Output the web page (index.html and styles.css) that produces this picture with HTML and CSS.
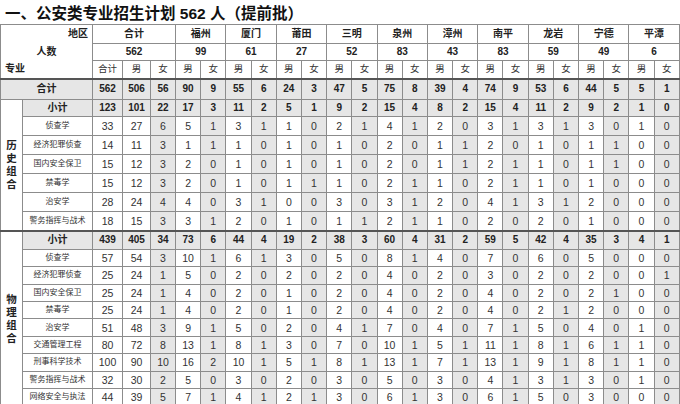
FILE: index.html
```html
<!DOCTYPE html>
<html lang="zh-CN">
<head>
<meta charset="utf-8">
<title>公安类专业招生计划</title>
<link rel="stylesheet" href="styles.css">
</head>
<body>
<h1 class="title">一、公安类专业招生计划 562 人（提前批）</h1>
<table class="plan">
<colgroup>
<col class="c-grp"><col class="c-major"><col class="c-t"><col class="c-m"><col class="c-f fem">
<col class="c-city"><col class="c-city fem"><col class="c-city"><col class="c-city fem">
<col class="c-city"><col class="c-city fem"><col class="c-city"><col class="c-city fem">
<col class="c-city"><col class="c-city fem"><col class="c-city"><col class="c-city fem">
<col class="c-city"><col class="c-city fem"><col class="c-city"><col class="c-city fem">
<col class="c-city"><col class="c-city fem"><col class="c-city"><col class="c-city fem">
</colgroup>
<thead>
<tr class="r-h1">
<th class="corner" rowspan="3" colspan="2"><div class="dq">地区</div><div class="rs">人数</div><div class="zy">专业</div></th>
<th colspan="3">合计</th><th colspan="2">福州</th><th colspan="2">厦门</th><th colspan="2">莆田</th><th colspan="2">三明</th><th colspan="2">泉州</th><th colspan="2">漳州</th><th colspan="2">南平</th><th colspan="2">龙岩</th><th colspan="2">宁德</th><th colspan="2">平潭</th>
</tr>
<tr class="r-h2">
<th colspan="3">562</th><th colspan="2">99</th><th colspan="2">61</th><th colspan="2">27</th><th colspan="2">52</th><th colspan="2">83</th><th colspan="2">43</th><th colspan="2">83</th><th colspan="2">59</th><th colspan="2">49</th><th colspan="2">6</th>
</tr>
<tr class="r-h3">
<td>合计</td><td>男</td><td>女</td><td>男</td><td>女</td><td>男</td><td>女</td><td>男</td><td>女</td><td>男</td><td>女</td><td>男</td><td>女</td><td>男</td><td>女</td><td>男</td><td>女</td><td>男</td><td>女</td><td>男</td><td>女</td><td>男</td><td>女</td>
</tr>
</thead>
<tbody>
<tr class="sum total"><th colspan="2" class="lbl-total">合计</th><td>562</td><td>506</td><td>56</td><td>90</td><td>9</td><td>55</td><td>6</td><td>24</td><td>3</td><td>47</td><td>5</td><td>75</td><td>8</td><td>39</td><td>4</td><td>74</td><td>9</td><td>53</td><td>6</td><td>44</td><td>5</td><td>5</td><td>1</td></tr>
</tbody>
<tbody class="sec hist">
<tr class="sum sub"><th class="grp" rowspan="7"><span>历<br>史<br>组<br>合</span></th><th class="lbl-sub">小计</th><td>123</td><td>101</td><td>22</td><td>17</td><td>3</td><td>11</td><td>2</td><td>5</td><td>1</td><td>9</td><td>2</td><td>15</td><td>4</td><td>8</td><td>2</td><td>15</td><td>4</td><td>11</td><td>2</td><td>9</td><td>2</td><td>1</td><td>0</td></tr>
<tr class="row"><td class="lbl">侦查学</td><td>33</td><td>27</td><td>6</td><td>5</td><td>1</td><td>3</td><td>1</td><td>1</td><td>0</td><td>2</td><td>1</td><td>4</td><td>1</td><td>2</td><td>0</td><td>3</td><td>1</td><td>3</td><td>1</td><td>3</td><td>0</td><td>1</td><td>0</td></tr>
<tr class="row"><td class="lbl">经济犯罪侦查</td><td>14</td><td>11</td><td>3</td><td>1</td><td>1</td><td>1</td><td>0</td><td>1</td><td>0</td><td>1</td><td>0</td><td>2</td><td>0</td><td>1</td><td>1</td><td>2</td><td>0</td><td>1</td><td>0</td><td>1</td><td>1</td><td>0</td><td>0</td></tr>
<tr class="row"><td class="lbl">国内安全保卫</td><td>15</td><td>12</td><td>3</td><td>2</td><td>0</td><td>1</td><td>0</td><td>1</td><td>0</td><td>1</td><td>0</td><td>2</td><td>0</td><td>1</td><td>1</td><td>2</td><td>1</td><td>1</td><td>0</td><td>1</td><td>1</td><td>0</td><td>0</td></tr>
<tr class="row"><td class="lbl">禁毒学</td><td>15</td><td>12</td><td>3</td><td>2</td><td>0</td><td>1</td><td>0</td><td>1</td><td>1</td><td>1</td><td>0</td><td>2</td><td>1</td><td>1</td><td>0</td><td>2</td><td>1</td><td>1</td><td>0</td><td>1</td><td>0</td><td>0</td><td>0</td></tr>
<tr class="row"><td class="lbl">治安学</td><td>28</td><td>24</td><td>4</td><td>4</td><td>0</td><td>3</td><td>1</td><td>0</td><td>0</td><td>3</td><td>0</td><td>3</td><td>1</td><td>2</td><td>0</td><td>4</td><td>1</td><td>3</td><td>1</td><td>2</td><td>0</td><td>0</td><td>0</td></tr>
<tr class="row"><td class="lbl">警务指挥与战术</td><td>18</td><td>15</td><td>3</td><td>3</td><td>1</td><td>2</td><td>0</td><td>1</td><td>0</td><td>1</td><td>1</td><td>2</td><td>1</td><td>1</td><td>0</td><td>2</td><td>0</td><td>2</td><td>0</td><td>1</td><td>0</td><td>0</td><td>0</td></tr>
</tbody>
<tbody class="sec phys">
<tr class="sum sub"><th class="grp" rowspan="10"><span>物<br>理<br>组<br>合</span></th><th class="lbl-sub">小计</th><td>439</td><td>405</td><td>34</td><td>73</td><td>6</td><td>44</td><td>4</td><td>19</td><td>2</td><td>38</td><td>3</td><td>60</td><td>4</td><td>31</td><td>2</td><td>59</td><td>5</td><td>42</td><td>4</td><td>35</td><td>3</td><td>4</td><td>1</td></tr>
<tr class="row"><td class="lbl">侦查学</td><td>57</td><td>54</td><td>3</td><td>10</td><td>1</td><td>6</td><td>1</td><td>3</td><td>0</td><td>5</td><td>0</td><td>8</td><td>1</td><td>4</td><td>0</td><td>7</td><td>0</td><td>6</td><td>0</td><td>5</td><td>0</td><td>0</td><td>0</td></tr>
<tr class="row"><td class="lbl">经济犯罪侦查</td><td>25</td><td>24</td><td>1</td><td>5</td><td>0</td><td>2</td><td>0</td><td>2</td><td>0</td><td>2</td><td>0</td><td>4</td><td>0</td><td>2</td><td>0</td><td>3</td><td>0</td><td>2</td><td>0</td><td>2</td><td>0</td><td>0</td><td>1</td></tr>
<tr class="row"><td class="lbl">国内安全保卫</td><td>25</td><td>24</td><td>1</td><td>4</td><td>0</td><td>2</td><td>0</td><td>1</td><td>0</td><td>2</td><td>0</td><td>4</td><td>0</td><td>2</td><td>0</td><td>4</td><td>0</td><td>2</td><td>0</td><td>2</td><td>1</td><td>0</td><td>0</td></tr>
<tr class="row"><td class="lbl">禁毒学</td><td>25</td><td>24</td><td>1</td><td>4</td><td>0</td><td>2</td><td>0</td><td>1</td><td>0</td><td>2</td><td>0</td><td>4</td><td>0</td><td>2</td><td>0</td><td>4</td><td>0</td><td>2</td><td>1</td><td>2</td><td>0</td><td>0</td><td>0</td></tr>
<tr class="row"><td class="lbl">治安学</td><td>51</td><td>48</td><td>3</td><td>9</td><td>1</td><td>5</td><td>0</td><td>2</td><td>0</td><td>4</td><td>1</td><td>7</td><td>0</td><td>4</td><td>0</td><td>7</td><td>1</td><td>5</td><td>0</td><td>4</td><td>0</td><td>1</td><td>0</td></tr>
<tr class="row"><td class="lbl">交通管理工程</td><td>80</td><td>72</td><td>8</td><td>13</td><td>1</td><td>8</td><td>1</td><td>3</td><td>0</td><td>7</td><td>0</td><td>10</td><td>1</td><td>5</td><td>1</td><td>11</td><td>1</td><td>8</td><td>1</td><td>6</td><td>1</td><td>1</td><td>0</td></tr>
<tr class="row"><td class="lbl">刑事科学技术</td><td>100</td><td>90</td><td>10</td><td>16</td><td>2</td><td>10</td><td>1</td><td>5</td><td>1</td><td>8</td><td>1</td><td>13</td><td>1</td><td>7</td><td>1</td><td>13</td><td>1</td><td>9</td><td>1</td><td>8</td><td>1</td><td>1</td><td>0</td></tr>
<tr class="row"><td class="lbl">警务指挥与战术</td><td>32</td><td>30</td><td>2</td><td>5</td><td>0</td><td>3</td><td>0</td><td>2</td><td>0</td><td>3</td><td>0</td><td>5</td><td>0</td><td>3</td><td>0</td><td>4</td><td>1</td><td>3</td><td>1</td><td>3</td><td>0</td><td>1</td><td>0</td></tr>
<tr class="row"><td class="lbl">网络安全与执法</td><td>44</td><td>39</td><td>5</td><td>7</td><td>1</td><td>4</td><td>1</td><td>2</td><td>1</td><td>3</td><td>0</td><td>6</td><td>1</td><td>3</td><td>0</td><td>6</td><td>1</td><td>5</td><td>0</td><td>3</td><td>0</td><td>0</td><td>0</td></tr>
</tbody>
</table>
</body>
</html>
```
FILE: styles.css
```css
html, body {
  margin: 0;
  padding: 0;
  background: #ffffff;
}

body {
  font-family: "Liberation Sans", "Noto Sans CJK SC", sans-serif;
  color: #222222;
}

.title {
  margin: 0;
  padding: 3px 0 0 5px;
  height: 21px;
  line-height: 22px;
  font-size: 15.5px;
  font-weight: bold;
  color: #111111;
}

.plan {
  border-collapse: collapse;
  table-layout: fixed;
  width: 679px;
}

.c-grp { width: 22px; }
.c-major { width: 70px; }
.c-t { width: 30px; }
.c-m { width: 28px; }
.c-f { width: 25px; }
.c-city { width: 25.2px; }

.fem { background: #e6e6e6; }

.plan th,
.plan td {
  border: 1px solid #8c8c8c;
  padding: 0;
  text-align: center;
  vertical-align: middle;
  white-space: nowrap;
  overflow: hidden;
  font-size: 10.5px;
  line-height: 12px;
  color: #333333;
  font-weight: normal;
}

.plan thead th,
.plan thead td {
  background: #ffffff;
}

.plan thead th {
  font-weight: bold;
  font-size: 10px;
  color: #222222;
}

.r-h1 { height: 18px; }
.r-h2 { height: 17px; }
.r-h3 { height: 18px; }

.r-h2 th {
  font-size: 10.5px;
}

.r-h3 td {
  font-size: 9.5px;
  color: #333333;
}

.corner {
  vertical-align: top;
  text-align: left;
}

.corner div {
  font-size: 10px;
  font-weight: bold;
  color: #222222;
}

.dq {
  height: 18px;
  line-height: 18px;
  text-align: right;
  padding-right: 4px;
}

.rs {
  height: 17px;
  line-height: 17px;
  text-align: center;
}

.zy {
  height: 18px;
  line-height: 18px;
  text-align: left;
  padding-left: 4px;
}

.sum th,
.sum td {
  background: #e6e6e6;
  font-weight: bold;
  font-size: 10px;
  color: #222222;
}

.total { height: 20px; }

.total th,
.total td {
  border-top: 2px solid #555555;
}

.lbl-total {
  font-size: 10px;
}

.lbl-sub {
  font-size: 9.5px;
}

.sub { height: 17px; }

.phys .sub { height: 18px; }

.phys .sub th,
.phys .sub td {
  border-top: 2px solid #555555;
}

.plan .grp {
  background: #ffffff;
  font-weight: bold;
  font-size: 10.5px;
  line-height: 13px;
  color: #222222;
}

.hist .row { height: 19.2px; }
.phys .row { height: 17.45px; }

.plan .lbl {
  font-size: 8px;
  color: #333333;
  text-align: center;
}
```
